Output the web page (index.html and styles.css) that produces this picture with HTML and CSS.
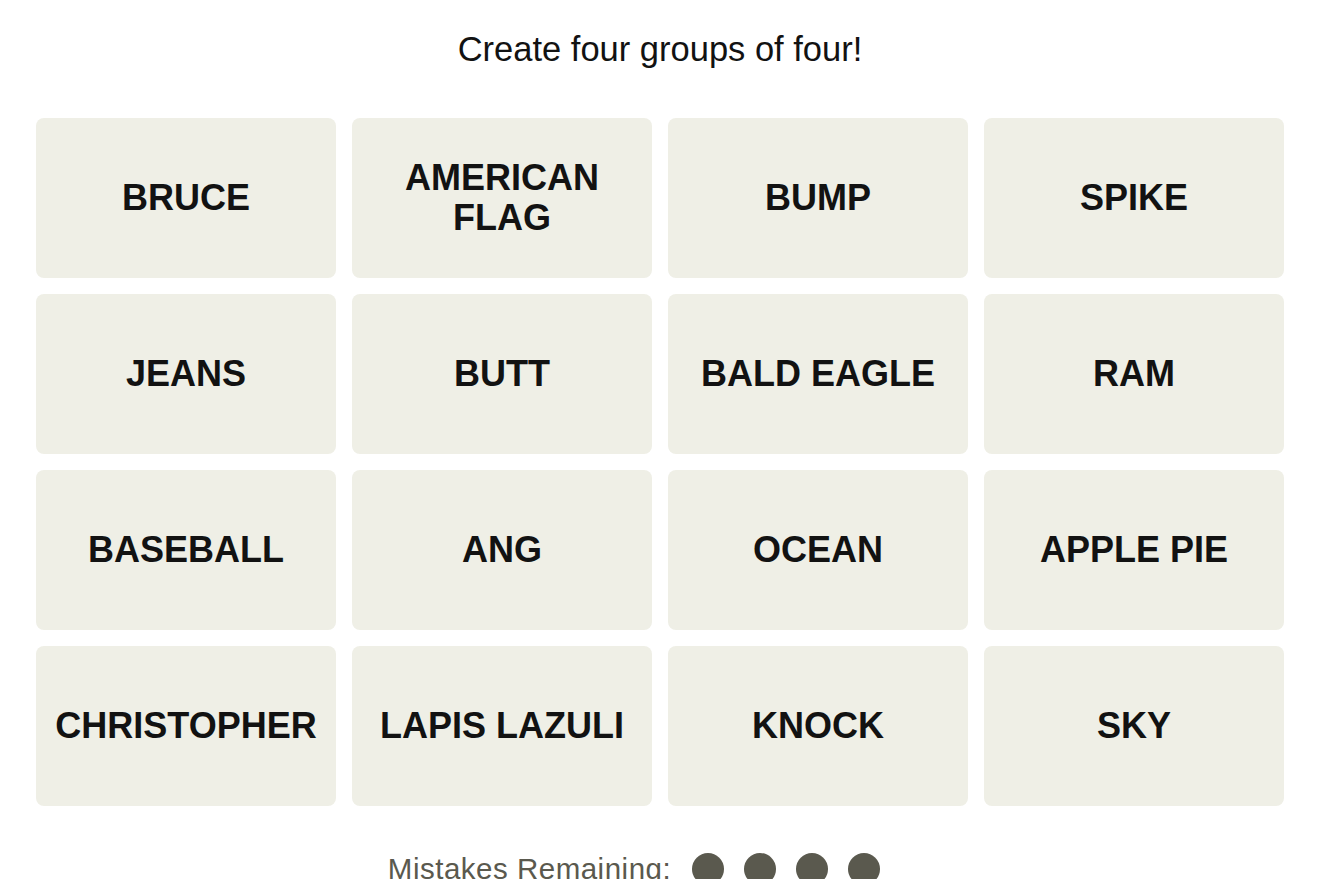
FILE: index.html
```html
<!DOCTYPE html>
<html lang="en">
<head>
<meta charset="utf-8">
<title>Connections</title>
<link rel="stylesheet" href="styles.css">
</head>
<body>
<main class="game">
  <p class="title">Create four groups of four!</p>
  <section class="board">
    <div class="tile">BRUCE</div>
    <div class="tile">AMERICAN<br>FLAG</div>
    <div class="tile">BUMP</div>
    <div class="tile">SPIKE</div>
    <div class="tile">JEANS</div>
    <div class="tile">BUTT</div>
    <div class="tile">BALD EAGLE</div>
    <div class="tile">RAM</div>
    <div class="tile">BASEBALL</div>
    <div class="tile">ANG</div>
    <div class="tile">OCEAN</div>
    <div class="tile">APPLE PIE</div>
    <div class="tile">CHRISTOPHER</div>
    <div class="tile">LAPIS LAZULI</div>
    <div class="tile">KNOCK</div>
    <div class="tile">SKY</div>
  </section>
  <div class="mistakes">
    <span class="mistakes-label">Mistakes Remaining:</span>
    <span class="dots">
      <span class="dot"></span>
      <span class="dot"></span>
      <span class="dot"></span>
      <span class="dot"></span>
    </span>
  </div>
</main>
</body>
</html>
```
FILE: styles.css
```css
html, body {
  margin: 0;
  padding: 0;
  background: #ffffff;
  height: 879px;
  overflow: hidden;
}
body {
  font-family: "Liberation Sans", Arial, sans-serif;
  color: #121212;
}
.game {
  display: flex;
  flex-direction: column;
  align-items: center;
}
.title {
  margin: 29px 0 0;
  font-size: 34.5px;
  line-height: 40px;
  color: #121212;
}
.board {
  margin-top: 49px;
  display: grid;
  grid-template-columns: repeat(4, 300px);
  grid-auto-rows: 160px;
  gap: 16px;
}
.tile {
  background: #efefe6;
  border-radius: 8px;
  display: flex;
  align-items: center;
  justify-content: center;
  text-align: center;
  font-weight: 700;
  font-size: 36px;
  line-height: 40px;
  color: #121212;
}
.mistakes {
  margin-top: 47px;
  display: flex;
  align-items: flex-start;
  gap: 21px;
  padding-right: 52px;
}
.mistakes-label {
  font-size: 29.5px;
  letter-spacing: 0.5px;
  line-height: 32px;
  color: #5a594e;
}
.dots {
  display: flex;
  gap: 20px;
}
.dot {
  width: 32px;
  height: 32px;
  border-radius: 50%;
  background: #5a594e;
}
```
